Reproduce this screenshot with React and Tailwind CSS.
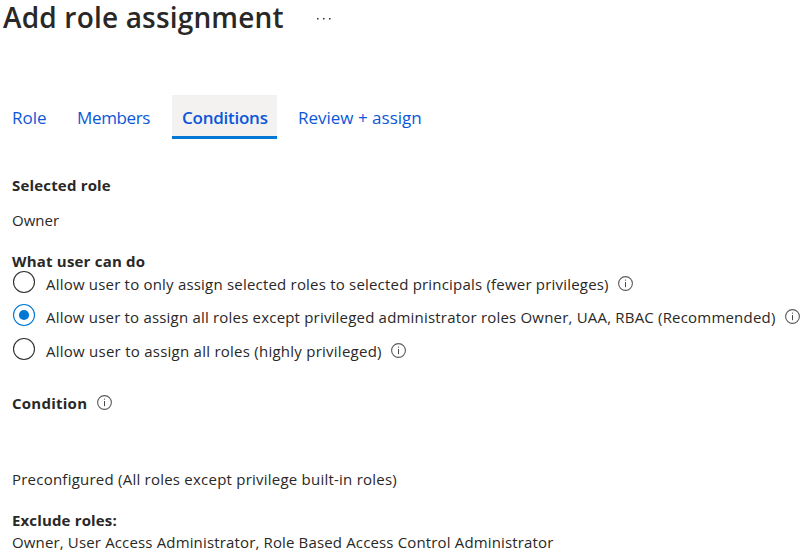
import React from "react";

function InfoIcon({ className = "" }) {
  return (
    <svg viewBox="0 0 15 15" fill="none" className={`h-[15px] w-[15px] shrink-0 ${className}`}>
      <circle cx="7.5" cy="7.5" r="6.9" stroke="#5c5b5a" strokeWidth="1.1" />
      <path d="M7.5 6v5.2" stroke="#4a4948" strokeWidth="1" />
      <circle cx="7.5" cy="4.1" r="0.7" fill="#4a4948" />
    </svg>
  );
}

function Radio({ checked }) {
  return (
    <svg viewBox="0 0 24 24" fill="none" className="h-6 w-6 shrink-0">
      <circle cx="12" cy="12" r="10.5" stroke={checked ? "#0078d4" : "#323130"} strokeWidth="1.1" />
      {checked && <circle cx="12" cy="12" r="5.1" fill="#0078d4" />}
    </svg>
  );
}

function Option({ checked, label, className, labelClass }) {
  return (
    <label className={`flex items-start ${className}`}>
      <Radio checked={checked} />
      <span className={`ml-2.5 mr-px mt-0.5 leading-6 ${labelClass}`}>{label}</span>
      <InfoIcon className="mt-[6px]" />
    </label>
  );
}

export default function App() {
  return (
    <main className="h-[555px] w-[809px] overflow-hidden whitespace-nowrap bg-white font-['Open_Sans','Noto_Sans',sans-serif] text-[15px] font-[370] leading-6 text-[#292827]">
      <header className="flex h-9 items-start pl-[3px]">
        <h1 className="w-[313px] text-[28px] font-semibold leading-[34px] tracking-[0.18px]">Add role assignment</h1>
        <svg viewBox="0 0 16 4" className="mt-[17px] h-1 w-4" fill="#323130">
          <rect x="1" y="1" width="1.5" height="1.5" />
          <rect x="7" y="1" width="1.5" height="1.5" />
          <rect x="13" y="1" width="1.5" height="1.5" />
        </svg>
      </header>

      <nav className="mt-[59px] flex h-11 pl-3 text-[17px] leading-[45px] text-[#0b57d8]">
        <a className="w-[65px]">Role</a>
        <a className="w-[95px] tracking-[-0.35px]">Members</a>
        <a className="w-[105px] border-b-[3px] border-[#0078d4] bg-[#f3f2f1] pl-2.5 font-semibold tracking-[-0.25px]">Conditions</a>
        <a className="ml-[21px]">Review + assign</a>
      </nav>

      <section className="pl-3 pt-[34px]">
        <h2 className="font-bold tracking-[0.18px]">Selected role</h2>
        <p className="mt-[11px]">Owner</p>
        <h2 className="mt-[17px] font-bold tracking-[0.2px]">What user can do</h2>
        <Option className="mt-[-3px] h-[33px]" label="Allow user to only assign selected roles to selected principals (fewer privileges)" labelClass="w-[571px] tracking-[0.2px]" />
        <Option checked className="h-[34px]" label="Allow user to assign all roles except privileged administrator roles Owner, UAA, RBAC (Recommended)" labelClass="w-[738px] tracking-[0.195px]" />
        <Option className="h-[33px]" label="Allow user to assign all roles (highly privileged)" labelClass="w-[344px] tracking-[0.25px]" />
        <div className="mt-[21px] flex items-center">
          <h2 className="w-[85px] font-bold tracking-[0.25px]">Condition</h2>
          <InfoIcon className="-mt-px" />
        </div>
        <p className="mt-[52px] tracking-[0.23px]">Preconfigured (All roles except privilege built-in roles)</p>
        <h2 className="mt-[17px] font-bold tracking-[0.15px]">Exclude roles:</h2>
        <p className="mt-[-2px] tracking-[0.15px]">Owner, User Access Administrator, Role Based Access Control Administrator</p>
      </section>
    </main>
  );
}
